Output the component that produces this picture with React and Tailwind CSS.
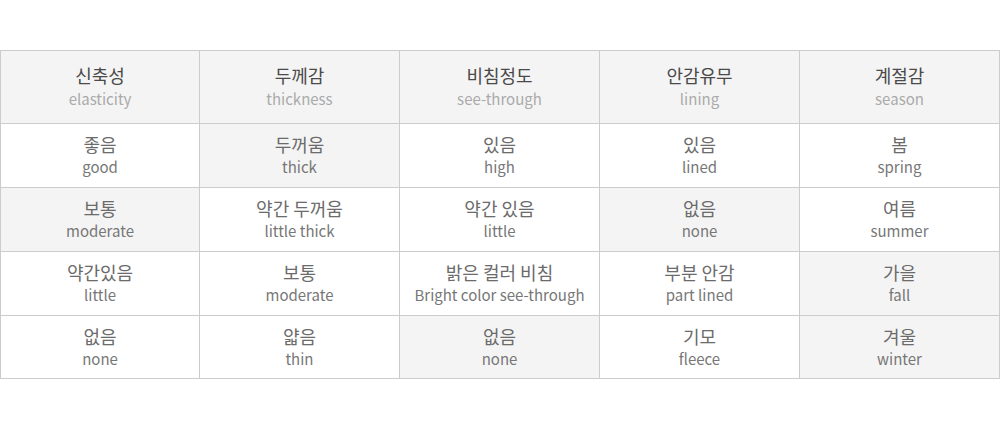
const headers = [
  ['신축성', 'elasticity'],
  ['두께감', 'thickness'],
  ['비침정도', 'see-through'],
  ['안감유무', 'lining'],
  ['계절감', 'season'],
];

// each row: [ko, en, highlighted]
const rows = [
  [['좋음', 'good', false], ['두꺼움', 'thick', true], ['있음', 'high', false], ['있음', 'lined', false], ['봄', 'spring', false]],
  [['보통', 'moderate', true], ['약간 두꺼움', 'little thick', false], ['약간 있음', 'little', false], ['없음', 'none', true], ['여름', 'summer', false]],
  [['약간있음', 'little', false], ['보통', 'moderate', false], ['밝은 컬러 비침', 'Bright color see-through', false], ['부분 안감', 'part lined', false], ['가을', 'fall', true]],
  [['없음', 'none', false], ['얇음', 'thin', false], ['없음', 'none', true], ['기모', 'fleece', false], ['겨울', 'winter', true]],
];

const font = { fontFamily: '"Noto Sans CJK KR", "Noto Sans", sans-serif' };

const App = () => {
  return (
    <div className="w-[1000px] h-[429px] bg-white pt-[50px]" style={font}>
      <div className="grid grid-cols-5 border-t border-[#cccccc]">
        {headers.map(([ko, en], i) => (
          <div
            key={ko}
            className={`h-[73px] flex flex-col items-center justify-center bg-[#f4f4f4] border-r border-b border-[#cccccc] ${i === 0 ? 'border-l' : ''}`}
          >
            <div className="text-[18px] leading-[23px] text-[#4a4a4a]">{ko}</div>
            <div className="text-[15px] leading-[23px] text-[#aaaaaa]">{en}</div>
          </div>
        ))}
        {rows.map((row, r) =>
          row.map(([ko, en, hl], i) => (
            <div
              key={`${r}-${i}`}
              className={`${r === 3 ? 'h-[63px]' : 'h-[64px]'} flex flex-col items-center justify-center border-r border-b border-[#cccccc] ${hl ? 'bg-[#f4f4f4]' : 'bg-white'} ${i === 0 ? 'border-l' : ''}`}
            >
              <div className="text-[18px] leading-[23px] text-[#6b6b6b]">{ko}</div>
              <div className="text-[15px] leading-[22px] text-[#777777]">{en}</div>
            </div>
          ))
        )}
      </div>
    </div>
  );
};

export default App;
